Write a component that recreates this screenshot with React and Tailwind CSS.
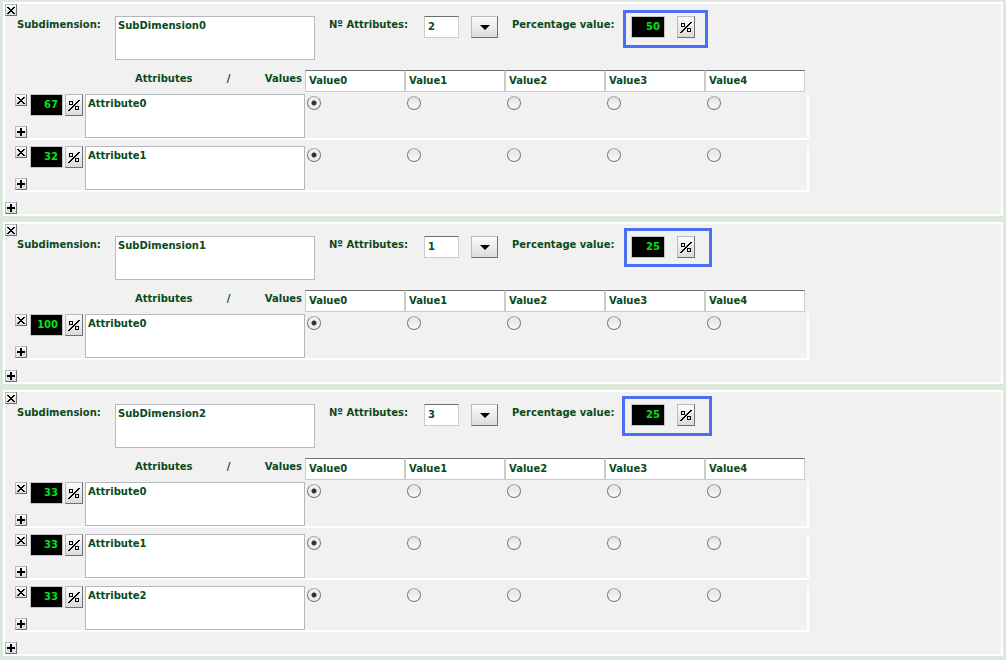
import React from "react";

const DATA = [
  {
    name: "SubDimension0",
    percentage: 50,
    mark: "left-[618px] top-[6px] w-[85px] h-[38px]",
    attributes: [67, 32],
  },
  {
    name: "SubDimension1",
    percentage: 25,
    mark: "left-[619px] top-[4px] w-[88px] h-[39px]",
    attributes: [100],
  },
  {
    name: "SubDimension2",
    percentage: 25,
    mark: "left-[617px] top-[4px] w-[90px] h-[40px]",
    attributes: [33, 33, 33],
  },
];

const VALUES = ["Value0", "Value1", "Value2", "Value3", "Value4"];

const raised =
  "flex shrink-0 items-center justify-center border border-t-[#b8babd] border-l-[#b8babd] border-r-[#6e7073] border-b-[#6e7073] bg-linear-to-b from-[#fbfbfb] to-[#dcdcdc]";

function SmallButton({ kind, label }) {
  return (
    <button type="button" aria-label={label} className={`${raised} size-3`}>
      <svg viewBox="0 0 10 10" className="size-[10px] shrink-0" shapeRendering="crispEdges">
        {kind === "remove" ? (
          <path
            d="M1 2h2v1h-2zM7 2h2v1h-2zM2 3h2v1h-2zM6 3h2v1h-2zM3 4h4v1h-4zM4 5h2v1h-2zM3 6h4v1h-4zM2 7h2v1h-2zM6 7h2v1h-2zM1 8h2v1h-2zM7 8h2v1h-2z"
            fill="#000"
          />
        ) : (
          <path d="M4 1h2v3h3v2h-3v3h-2v-3h-3v-2h3z" fill="#000" />
        )}
      </svg>
    </button>
  );
}

function PercentButton({ label }) {
  return (
    <button type="button" aria-label={label} className={`${raised} h-[22px] w-[18px]`}>
      <svg viewBox="0 0 12 12" className="size-3 shrink-0" shapeRendering="crispEdges">
        <path
          d="M1 2h4v4h-4zM2 3v2h2v-2zM7 7h4v4h-4zM8 8v2h2v-2z"
          fill="#000"
          fillRule="evenodd"
        />
        <path
          d="M10 1h2v1h-2zM9 2h2v1h-2zM8 3h2v1h-2zM7 4h2v1h-2zM6 5h2v1h-2zM5 6h2v1h-2zM4 7h2v1h-2zM3 8h2v1h-2zM2 9h2v1h-2zM1 10h2v1h-2zM0 11h2v1h-2z"
          fill="#000"
        />
      </svg>
    </button>
  );
}

const sunken = "block h-[22px] border border-[#ccc] border-t-[#6f6f6f] bg-white pb-[2px]";
const numeric =
  "block h-[22px] border border-[#c6c6c6] bg-black pr-1 pb-[2px] text-right text-[#00e416]";
const area =
  "block h-11 resize-none overflow-hidden border border-[#b5b8bc] bg-white px-[2px] py-[3px] leading-3";

function AttributeRow({ group, index, percentage }) {
  const id = `${group}-attribute-${index}`;
  return (
    <div className="flex w-[794px] border-r-2 border-b-2 border-white">
      <div className="flex w-[15px] flex-col justify-between">
        <SmallButton kind="remove" label="Remove attribute" />
        <SmallButton kind="add" label="Add attribute" />
      </div>
      <input
        aria-label="Attribute percentage"
        defaultValue={percentage}
        className={`${numeric} mr-[2px] w-[33px]`}
      />
      <PercentButton label="Apply attribute percentage" />
      <textarea
        aria-label="Attribute name"
        defaultValue={`Attribute${index}`}
        className={`${area} ml-[2px] w-[220px]`}
      />
      <div className="grid grid-cols-[repeat(5,100px)]">
        {VALUES.map((value, i) => (
          <input
            key={value}
            type="radio"
            name={id}
            aria-label={value}
            defaultChecked={i === 0}
            className="mt-[2px] ml-[2px] size-[14px] appearance-none rounded-full border border-[#77797c] border-t-[#a9abad] bg-linear-to-b from-[#e2e2e2] to-[#fafafa] checked:bg-[radial-gradient(circle,#2b3340_0_2px,#f0f0f0_3px)]"
          />
        ))}
      </div>
    </div>
  );
}

function Subdimension({ name, percentage, mark, attributes }) {
  return (
    <section className="relative border-2 border-white bg-[#f1f1f1]">
      <SmallButton kind="remove" label="Remove subdimension" />
      <div className="flex pl-3">
        <label htmlFor={`${name}-name`} className="w-[98px] pt-[2px]">
          Subdimension:
        </label>
        <textarea id={`${name}-name`} defaultValue={name} className={`${area} w-[200px]`} />
        <label htmlFor={`${name}-count`} className="ml-[14px] w-[95px] pt-[2px]">
          Nº Attributes:
        </label>
        <input
          id={`${name}-count`}
          defaultValue={attributes.length}
          className={`${sunken} w-[35px] px-[3px]`}
        />
        <button
          type="button"
          aria-label="Set number of attributes"
          className={`${raised} ml-3 h-[22px] w-[27px]`}
        >
          <svg viewBox="0 0 10 5" className="h-[5px] w-[10px]">
            <path d="M0 0h10l-5 5z" fill="#000" />
          </svg>
        </button>
        <label htmlFor={`${name}-percentage`} className="ml-[14px] w-[119px] pt-[2px]">
          Percentage value:
        </label>
        <input
          id={`${name}-percentage`}
          defaultValue={percentage}
          className={`${numeric} mr-3 w-[34px]`}
        />
        <PercentButton label="Apply percentage" />
      </div>
      <div className={`pointer-events-none absolute border-3 border-[#4c6ef5] ${mark}`} />
      <div className="mt-[10px] flex">
        <div className="flex w-[300px] justify-between pt-[2px] pr-[3px] pl-[130px]">
          <span>Attributes</span>
          <span>/</span>
          <span>Values</span>
        </div>
        {VALUES.map((value) => (
          <input
            key={value}
            aria-label={`${value} name`}
            defaultValue={value}
            className={`${sunken} w-[100px] px-[3px]`}
          />
        ))}
      </div>
      <div className="mt-[2px] mb-[10px] ml-[10px] flex flex-col gap-[6px]">
        {attributes.map((p, i) => (
          <AttributeRow key={i} group={name} index={i} percentage={p} />
        ))}
      </div>
      <SmallButton kind="add" label="Add subdimension" />
    </section>
  );
}

export default function App() {
  return (
    <main className="flex min-h-screen flex-col gap-[6px] bg-[#dce8dc] px-[3px] pt-[2px] pb-1 font-['DejaVu_Sans',sans-serif] text-[10px] leading-[14px] font-bold text-[#0a4a1a]">
      {DATA.map((d) => (
        <Subdimension key={d.name} {...d} />
      ))}
    </main>
  );
}
